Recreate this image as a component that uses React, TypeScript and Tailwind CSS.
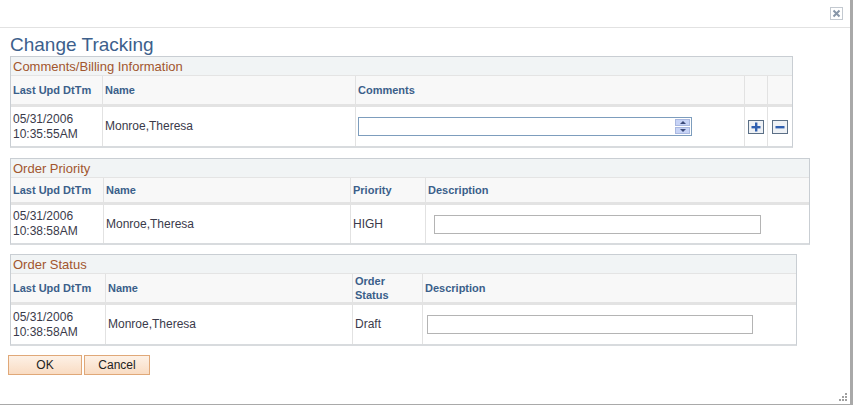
import React from 'react';

const font = { fontFamily: '"Liberation Sans", Arial, sans-serif' };

function SectionHeader({ title }: { title: string }) {
  return (
    <div className="h-[19px] bg-[#f1f4f5] border-b border-[#e4e4e4] pl-[2px] text-[13px] leading-[19px] text-[#a2562e]">
      {title}
    </div>
  );
}

function HeadCell({ w, children, last }: { w: string; children?: React.ReactNode; last?: boolean }) {
  return (
    <div className={`${w} flex items-center pl-[2px] text-[11px] font-bold text-[#3b5f8a] leading-[14px] ${last ? '' : 'border-r border-[#e2e2e2]'}`}>
      {children}
    </div>
  );
}

function DataCell({ w, children, last }: { w: string; children?: React.ReactNode; last?: boolean }) {
  return (
    <div className={`${w} flex items-center pl-[2px] text-[12px] text-[#3a3a4a] leading-[15px] ${last ? '' : 'border-r border-[#e2e2e2]'}`}>
      {children}
    </div>
  );
}

function Stamp({ time }: { time: string }) {
  return (
    <span>
      05/31/2006
      <br />
      {time}
    </span>
  );
}

export default function App() {
  return (
    <div className="relative w-[853px] h-[405px] bg-white overflow-hidden" style={font}>
      <div className="w-[850px] h-[404px] border-r-[3px] border-b-[2px] border-[#a9a9a9] box-content flex flex-col">
        {/* title bar */}
        <div className="h-[28px] border-b border-[#e2e2e2] flex justify-end items-start pr-[7px] pt-[7px]">
          <div className="w-[13px] h-[13px] border border-[#c3c9d0] flex items-center justify-center">
            <svg width="9" height="9" viewBox="0 0 9 9">
              <path d="M1.5 1.5 L7.5 7.5 M7.5 1.5 L1.5 7.5" stroke="#8796a8" strokeWidth="2" />
            </svg>
          </div>
        </div>

        <div className="pl-[10px] pt-[6px] text-[19px] leading-[21px] text-[#3d5f8c]">Change Tracking</div>

        {/* Comments / Billing */}
        <div className="ml-[10px] mt-[1px] w-[783px] border border-[#c9ced3] border-b-2 border-b-[#d8dbde]">
          <SectionHeader title="Comments/Billing Information" />
          <div className="flex h-[31px] bg-[#f8f8f8] border-b-[3px] border-[#e3e3e3]">
            <HeadCell w="w-[92px]">Last Upd DtTm</HeadCell>
            <HeadCell w="w-[253px]">Name</HeadCell>
            <HeadCell w="w-[389px]">Comments</HeadCell>
            <HeadCell w="w-[23px]" />
            <HeadCell w="w-[24px]" last />
          </div>
          <div className="flex h-[39px]">
            <DataCell w="w-[92px]"><Stamp time="10:35:55AM" /></DataCell>
            <DataCell w="w-[253px]">Monroe,Theresa</DataCell>
            <DataCell w="w-[389px]">
              <div className="w-[334px] h-[19px] border border-[#7d9dbd] flex justify-end items-stretch">
                <div className="w-[17px] flex flex-col gap-[1px] p-[1px]">
                  <div className="flex-1 bg-[#c7d3f6] border border-[#a9b8e0] flex items-center justify-center">
                    <div className="w-0 h-0 border-l-[3px] border-r-[3px] border-b-[3px] border-l-transparent border-r-transparent border-b-[#3b4a78]" />
                  </div>
                  <div className="flex-1 bg-[#c7d3f6] border border-[#a9b8e0] flex items-center justify-center">
                    <div className="w-0 h-0 border-l-[3px] border-r-[3px] border-t-[3px] border-l-transparent border-r-transparent border-t-[#3b4a78]" />
                  </div>
                </div>
              </div>
            </DataCell>
            <DataCell w="w-[23px] justify-center !pl-0">
              <div className="w-[16px] h-[14px] border border-[#5b6f86] bg-[#eef1f5] flex items-center justify-center">
                <svg width="10" height="10" viewBox="0 0 10 10">
                  <rect x="4" y="0.5" width="2.4" height="9" fill="#2f5fb0" />
                  <rect x="0.5" y="4" width="9" height="2.4" fill="#2f5fb0" />
                </svg>
              </div>
            </DataCell>
            <DataCell w="w-[24px] justify-center !pl-0" last>
              <div className="w-[16px] h-[14px] border border-[#5b6f86] bg-[#eef1f5] flex items-center justify-center">
                <svg width="10" height="10" viewBox="0 0 10 10">
                  <rect x="0.5" y="4" width="9" height="2.4" fill="#2f5fb0" />
                </svg>
              </div>
            </DataCell>
          </div>
        </div>

        {/* Order Priority */}
        <div className="ml-[10px] mt-[10px] w-[800px] border border-[#c9ced3] border-b-2 border-b-[#d8dbde]">
          <SectionHeader title="Order Priority" />
          <div className="flex h-[27px] bg-[#f8f8f8] border-b-[3px] border-[#e3e3e3]">
            <HeadCell w="w-[93px]">Last Upd DtTm</HeadCell>
            <HeadCell w="w-[247px]">Name</HeadCell>
            <HeadCell w="w-[75px]">Priority</HeadCell>
            <HeadCell w="flex-1" last>Description</HeadCell>
          </div>
          <div className="flex h-[38px]">
            <DataCell w="w-[93px]"><Stamp time="10:38:58AM" /></DataCell>
            <DataCell w="w-[247px]">Monroe,Theresa</DataCell>
            <DataCell w="w-[75px]">HIGH</DataCell>
            <DataCell w="flex-1" last>
              <div className="ml-[6px] w-[327px] h-[19px] border border-[#b4b4b4]" />
            </DataCell>
          </div>
        </div>

        {/* Order Status */}
        <div className="ml-[10px] mt-[9px] w-[787px] border border-[#c9ced3] border-b-2 border-b-[#d8dbde]">
          <SectionHeader title="Order Status" />
          <div className="flex h-[31px] bg-[#f8f8f8] border-b-[3px] border-[#e3e3e3]">
            <HeadCell w="w-[95px]">Last Upd DtTm</HeadCell>
            <HeadCell w="w-[247px]">Name</HeadCell>
            <HeadCell w="w-[70px]">Order<br />Status</HeadCell>
            <HeadCell w="flex-1" last>Description</HeadCell>
          </div>
          <div className="flex h-[39px]">
            <DataCell w="w-[95px]"><Stamp time="10:38:58AM" /></DataCell>
            <DataCell w="w-[247px]">Monroe,Theresa</DataCell>
            <DataCell w="w-[70px]">Draft</DataCell>
            <DataCell w="flex-1" last>
              <div className="ml-[2px] w-[326px] h-[19px] border border-[#b4b4b4]" />
            </DataCell>
          </div>
        </div>

        {/* buttons */}
        <div className="flex gap-[2px] ml-[8px] mt-[9px]">
          <button className="w-[74px] h-[20px] border border-[#e0a878] bg-gradient-to-b from-[#fdf1e6] to-[#f9dcc3] text-[12px] text-[#222] leading-none">
            OK
          </button>
          <button className="w-[66px] h-[20px] border border-[#e0a878] bg-gradient-to-b from-[#fdf1e6] to-[#f9dcc3] text-[12px] text-[#222] leading-none">
            Cancel
          </button>
        </div>
      </div>

      {/* resize grip */}
      <svg className="absolute right-[6px] bottom-[4px]" width="8" height="8" viewBox="0 0 8 8">
        <rect x="6" y="0" width="2" height="2" fill="#a0a0a0" />
        <rect x="3" y="3" width="2" height="2" fill="#a0a0a0" />
        <rect x="6" y="3" width="2" height="2" fill="#a0a0a0" />
        <rect x="0" y="6" width="2" height="2" fill="#a0a0a0" />
        <rect x="3" y="6" width="2" height="2" fill="#a0a0a0" />
        <rect x="6" y="6" width="2" height="2" fill="#a0a0a0" />
      </svg>
    </div>
  );
}
